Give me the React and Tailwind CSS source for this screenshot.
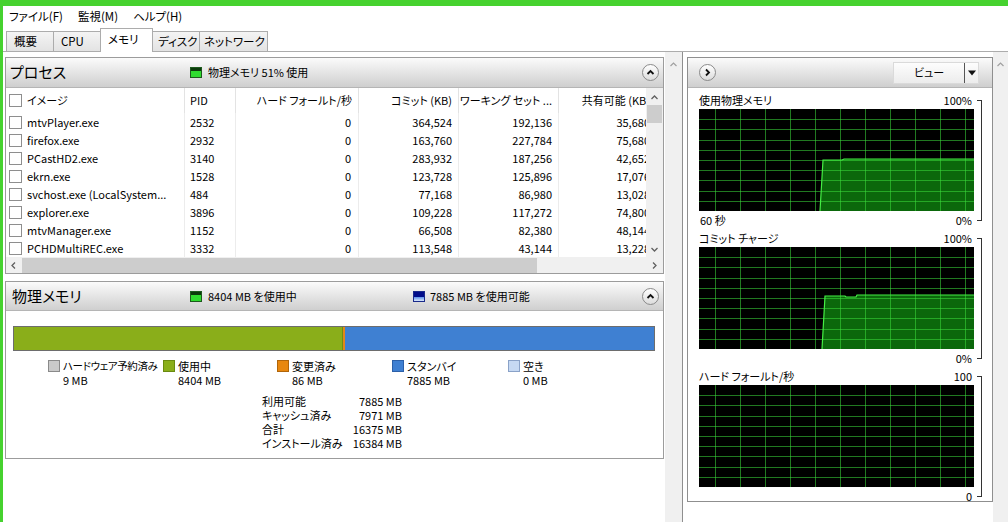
import React from "react";

const rows = [
  ["mtvPlayer.exe", "2532", "0", "364,524", "192,136", "35,680"],
  ["firefox.exe", "2932", "0", "163,760", "227,784", "75,680"],
  ["PCastHD2.exe", "3140", "0", "283,932", "187,256", "42,652"],
  ["ekrn.exe", "1528", "0", "123,728", "125,896", "17,076"],
  ["svchost.exe (LocalSystem...", "484", "0", "77,168", "86,980", "13,028"],
  ["explorer.exe", "3896", "0", "109,228", "117,272", "74,800"],
  ["mtvManager.exe", "1152", "0", "66,508", "82,380", "48,144"],
  ["PCHDMultiREC.exe", "3332", "0", "113,548", "43,144", "13,228"],
];

function CircleBtn({ dir }) {
  return (
    <div className="w-[17px] h-[17px] rounded-full border border-[#8a8a8a] bg-gradient-to-b from-white to-[#dcdcdc] flex items-center justify-center shrink-0">
      <svg width="11" height="11" viewBox="0 0 11 11">
        {dir === "up" ? (
          <path d="M2.5 7 L5.5 4 L8.5 7" fill="none" stroke="#111" strokeWidth="1.8" />
        ) : (
          <path d="M4 2.5 L7 5.5 L4 8.5" fill="none" stroke="#111" strokeWidth="1.8" />
        )}
      </svg>
    </div>
  );
}

function GreenInd() {
  return (
    <div className="w-[12px] h-[11px] flex flex-col border border-[#1d5a1d] shrink-0">
      <div className="h-[3px] bg-[#0b3a0b]" />
      <div className="flex-1 bg-[#2fdc2f]" />
    </div>
  );
}

function BlueInd() {
  return (
    <div className="w-[12px] h-[11px] flex flex-col border border-[#1a2a8a] shrink-0">
      <div className="h-[5px] bg-[#000c8a]" />
      <div className="flex-1 bg-gradient-to-b from-[#5a90ea] to-[#dce8fb]" />
    </div>
  );
}

function Check() {
  return <div className="w-[13px] h-[13px] border border-[#8e8e8e] bg-white shrink-0" />;
}

function Graph({ fill, line }) {
  const W = 275;
  const H = 102;
  const vx = [];
  for (let x = 16.5; x < W; x += 25) vx.push(x);
  const hy = [];
  for (let i = 1; i < 10; i++) hy.push(Math.round((i * H) / 10) + 0.5);
  return (
    <svg width={W} height={H} className="block">
      <rect width={W} height={H} fill="#000" />
      {fill && <path d={fill} fill="#0b680b" />}
      {vx.map((x) => (
        <line key={"v" + x} x1={x} y1="0" x2={x} y2={H} stroke="rgba(60,220,60,0.55)" strokeWidth="1" />
      ))}
      {hy.map((y) => (
        <line key={"h" + y} x1="0" y1={y} x2={W} y2={y} stroke="rgba(60,220,60,0.55)" strokeWidth="1" />
      ))}
      {line && <path d={line} fill="none" stroke="#45ee45" strokeWidth="1.2" />}
    </svg>
  );
}

function GraphSection({ label, top, bottomLeft, bottom, fill, line }) {
  return (
    <div className="flex">
      <div className="w-[275px] flex flex-col">
        <div className="h-[17px] flex items-center justify-between pr-[2px] whitespace-nowrap">
          <span>{label}</span>
          <span>{top}</span>
        </div>
        <Graph fill={fill} line={line} />
        <div className="h-[19px] flex items-center justify-between pr-[2px] whitespace-nowrap">
          <span className="pl-[1px]">{bottomLeft}</span>
          <span>{bottom}</span>
        </div>
      </div>
      <div className="pt-[8px] pl-[3px]">
        <div className="w-[5px] h-[121px] border-t border-r border-b border-[#333]" />
      </div>
    </div>
  );
}

const tabCls =
  "h-[20px] -ml-px border border-b-0 border-[#acacac] bg-gradient-to-b from-[#f4f4f4] to-[#e3e3e3] leading-[19px] whitespace-nowrap overflow-hidden";

export default function App() {
  const font = "font-['Noto_Sans_CJK_JP',sans-serif] [font-feature-settings:'palt']";
  return (
    <div className={`w-[1008px] h-[522px] bg-[#46d22f] pt-[6px] pl-[3px] overflow-hidden ${font} text-[11px] text-black whitespace-nowrap`}>
      <div className="w-full h-full bg-white flex flex-col">
        {/* menu */}
        <div className="h-[21px] flex items-center gap-[15px] pl-[6px] shrink-0 text-[11.5px]">
          <span>ファイル(F)</span>
          <span>監視(M)</span>
          <span>ヘルプ(H)</span>
        </div>
        {/* tabs */}
        <div className="h-[25px] flex items-end pl-[4px] border-b border-[#acacac] shrink-0 text-[11.5px]">
          <div className={`${tabCls} w-[48px] pl-[7px]`}>概要</div>
          <div className={`${tabCls} w-[48px] pl-[7px]`}>CPU</div>
          <div className="w-[53px] h-[24px] -ml-px -mb-px relative z-10 border border-b-0 border-[#acacac] bg-white pl-[7px] leading-[20px]">メモリ</div>
          <div className={`${tabCls} w-[48px] pl-[5px]`}>ディスク</div>
          <div className={`${tabCls} w-[69px] pl-[4px]`}>ネットワーク</div>
        </div>
        {/* main */}
        <div className="flex-1 flex min-h-0">
          {/* left pane */}
          <div className="w-[662px] pl-[2px] pt-[5px] shrink-0">
            {/* process panel */}
            <div className="w-[659px] h-[217px] border border-[#9c9c9c] flex flex-col">
              <div className="h-[30px] border-b border-[#b5b5b5] bg-gradient-to-b from-[#fbfbfb] to-[#cfcfcf] flex items-center pl-[4px] pr-[4px] shrink-0">
                <span className="text-[15px] w-[180px]">プロセス</span>
                <GreenInd />
                <span className="ml-[6px]">物理メモリ 51% 使用</span>
                <div className="flex-1" />
                <CircleBtn dir="up" />
              </div>
              <div className="flex">
                <div className="w-[640px]">
                  <div className="h-[25px] flex items-center">
                    <div className="w-[179px] h-full border-r border-[#e3e3e3] flex items-center pl-[3px] gap-[5px]">
                      <Check />
                      <span>イメージ</span>
                    </div>
                    <div className="w-[51px] h-full border-r border-[#e3e3e3] flex items-center pl-[5px]">PID</div>
                    <div className="w-[123px] h-full border-r border-[#e3e3e3] flex items-center justify-end pr-[6px]">ハード フォールト/秒</div>
                    <div className="w-[100px] h-full border-r border-[#e3e3e3] flex items-center justify-end pr-[6px]">コミット (KB)</div>
                    <div className="w-[100px] h-full border-r border-[#e3e3e3] flex items-center justify-end pr-[6px]">ワーキング セット ...</div>
                    <div className="w-[87px] h-full overflow-hidden">
                      <div className="w-[95px] h-full flex items-center justify-end pr-[4px]">共有可能 (KB)</div>
                    </div>
                  </div>
                  {rows.map((r) => (
                    <div key={r[0]} className="h-[18px] flex items-center">
                      <div className="w-[179px] h-full border-r border-[#ececec] flex items-center pl-[3px] gap-[5px]">
                        <Check />
                        <span>{r[0]}</span>
                      </div>
                      <div className="w-[51px] h-full border-r border-[#ececec] flex items-center pl-[5px]">{r[1]}</div>
                      <div className="w-[123px] h-full border-r border-[#ececec] flex items-center justify-end pr-[7px]">{r[2]}</div>
                      <div className="w-[100px] h-full border-r border-[#ececec] flex items-center justify-end pr-[6px]">{r[3]}</div>
                      <div className="w-[100px] h-full border-r border-[#ececec] flex items-center justify-end pr-[6px]">{r[4]}</div>
                      <div className="w-[87px] h-full overflow-hidden">
                        <div className="w-[95px] h-full flex items-center justify-end pr-[4px]">{r[5]}</div>
                      </div>
                    </div>
                  ))}
                </div>
                {/* vertical scrollbar */}
                <div className="w-[17px] bg-[#f0f0f0] flex flex-col items-center">
                  <svg width="9" height="14" className="mt-[3px]"><path d="M1.5 8 L4.5 5 L7.5 8" fill="none" stroke="#606060" strokeWidth="1.3" /></svg>
                  <div className="w-[15px] h-[18px] bg-[#cdcdcd]" />
                  <div className="flex-1" />
                  <svg width="9" height="12" className="mb-[1px]"><path d="M1.5 4 L4.5 7 L7.5 4" fill="none" stroke="#606060" strokeWidth="1.3" /></svg>
                </div>
              </div>
              {/* horizontal scrollbar */}
              <div className="h-[16px] bg-[#f0f0f0] flex items-center">
                <div className="w-[15px] flex justify-center">
                  <svg width="9" height="9"><path d="M6 1.5 L3 4.5 L6 7.5" fill="none" stroke="#606060" strokeWidth="1.3" /></svg>
                </div>
                <div className="ml-[1px] w-[515px] h-[15px] bg-[#cdcdcd]" />
                <div className="flex-1" />
                <div className="w-[17px] flex justify-center">
                  <svg width="9" height="9"><path d="M3 1.5 L6 4.5 L3 7.5" fill="none" stroke="#606060" strokeWidth="1.3" /></svg>
                </div>
              </div>
            </div>
            {/* physical memory panel */}
            <div className="mt-[7px] w-[659px] h-[178px] border border-[#9c9c9c] flex flex-col">
              <div className="h-[29px] border-b border-[#b5b5b5] bg-gradient-to-b from-[#fbfbfb] to-[#cfcfcf] flex items-center pl-[6px] pr-[4px] shrink-0">
                <span className="text-[15px] w-[178px]">物理メモリ</span>
                <GreenInd />
                <span className="ml-[6px] w-[205px]">8404 MB を使用中</span>
                <BlueInd />
                <span className="ml-[5px]">7885 MB を使用可能</span>
                <div className="flex-1" />
                <CircleBtn dir="up" />
              </div>
              <div className="pt-[15px] pl-[7px] pr-[8px]">
                <div className="h-[25px] flex border border-[#6d6d6d]">
                  <div className="w-[329px] bg-[#8aae1a] border-r border-[#6f8d12]" />
                  <div className="w-[2px] bg-[#e3871a]" />
                  <div className="flex-1 bg-[#3f80d2]" />
                </div>
              </div>
              <div className="mt-[8px] pl-[42px] flex">
                {[
                  ["ハードウェア予約済み", "9 MB", "bg-[#cacaca] border-[#8a8a8a]", "w-[115px]", "text-[10.5px] tracking-[-0.4px]"],
                  ["使用中", "8404 MB", "bg-[#8aae1a] border-[#6a8a10]", "w-[114px]", ""],
                  ["変更済み", "86 MB", "bg-[#e8870e] border-[#b0650a]", "w-[115px]", ""],
                  ["スタンバイ", "7885 MB", "bg-[#3f80d2] border-[#2c60a8]", "w-[116px]", ""],
                  ["空き", "0 MB", "bg-[#c6d9f3] border-[#8aa2c8]", "w-[100px]", ""],
                ].map(([l, v, c, w, t]) => (
                  <div key={l} className={`${w} flex`}>
                    <div className={`w-[12px] h-[12px] border ${c} mt-[1px] shrink-0`} />
                    <div className="ml-[3px] flex flex-col leading-[14px]">
                      <span className={t}>{l}</span>
                      <span>{v}</span>
                    </div>
                  </div>
                ))}
              </div>
              <div className="mt-[7px] pl-[256px] flex flex-col leading-[14px]">
                {[
                  ["利用可能", "7885 MB"],
                  ["キャッシュ済み", "7971 MB"],
                  ["合計", "16375 MB"],
                  ["インストール済み", "16384 MB"],
                ].map(([l, v]) => (
                  <div key={l} className="flex h-[14px]">
                    <span className="w-[78px]">{l}</span>
                    <span className="w-[62px] text-right">{v}</span>
                  </div>
                ))}
              </div>
            </div>
          </div>
          {/* left pane scrollbar */}
          <div className="w-[17px] bg-[#f0f0f0] flex justify-center shrink-0">
            <svg width="9" height="9" className="mt-[8px]"><path d="M1.5 6 L4.5 3 L7.5 6" fill="none" stroke="#a0a0a0" strokeWidth="1.2" /></svg>
          </div>
          <div className="w-px bg-[#8f8f8f] shrink-0" />
          {/* right pane */}
          <div className="w-[310px] pl-[4px] pt-[5px] shrink-0">
            <div className="w-[306px] h-[445px] border border-[#8f8f8f] flex flex-col overflow-hidden">
              <div className="h-[30px] border-b border-[#b5b5b5] bg-gradient-to-b from-[#fbfbfb] to-[#cfcfcf] flex items-center pl-[11px] pr-[13px] shrink-0">
                <CircleBtn dir="right" />
                <div className="flex-1" />
                <div className="w-[86px] h-[22px] bg-gradient-to-b from-[#fdfdfd] to-[#ececec] border border-[#dadada] flex items-center">
                  <span className="w-[71px] text-center">ビュー</span>
                  <div className="w-px h-[20px] bg-[#555]" />
                  <svg width="12" height="8" className="ml-[1px]"><path d="M2 1.5 L10 1.5 L6 6.5 Z" fill="#111" /></svg>
                </div>
              </div>
              <div className="pl-[11px] pt-[4px] flex flex-col">
                <GraphSection
                  label="使用物理メモリ"
                  top="100%"
                  bottomLeft="60 秒"
                  bottom="0%"
                  fill="M121 102 L124 51 L143 51 L145 50 L275 50 L275 102 Z"
                  line="M121 102 L124 51 L143 51 L145 50 L275 50"
                />
                <GraphSection
                  label="コミット チャージ"
                  top="100%"
                  bottomLeft=""
                  bottom="0%"
                  fill="M123 102 L126 49 L146 49 L147 50 L157 50 L158 48 L275 48 L275 102 Z"
                  line="M123 102 L126 49 L146 49 L147 50 L157 50 L158 48 L275 48"
                />
                <GraphSection label="ハード フォールト/秒" top="100" bottomLeft="" bottom="0" />
              </div>
            </div>
          </div>
          {/* right scrollbar */}
          <div className="flex-1 bg-[#f0f0f0] flex justify-center">
            <svg width="9" height="9" className="mt-[8px]"><path d="M1.5 6 L4.5 3 L7.5 6" fill="none" stroke="#a0a0a0" strokeWidth="1.2" /></svg>
          </div>
        </div>
      </div>
    </div>
  );
}
